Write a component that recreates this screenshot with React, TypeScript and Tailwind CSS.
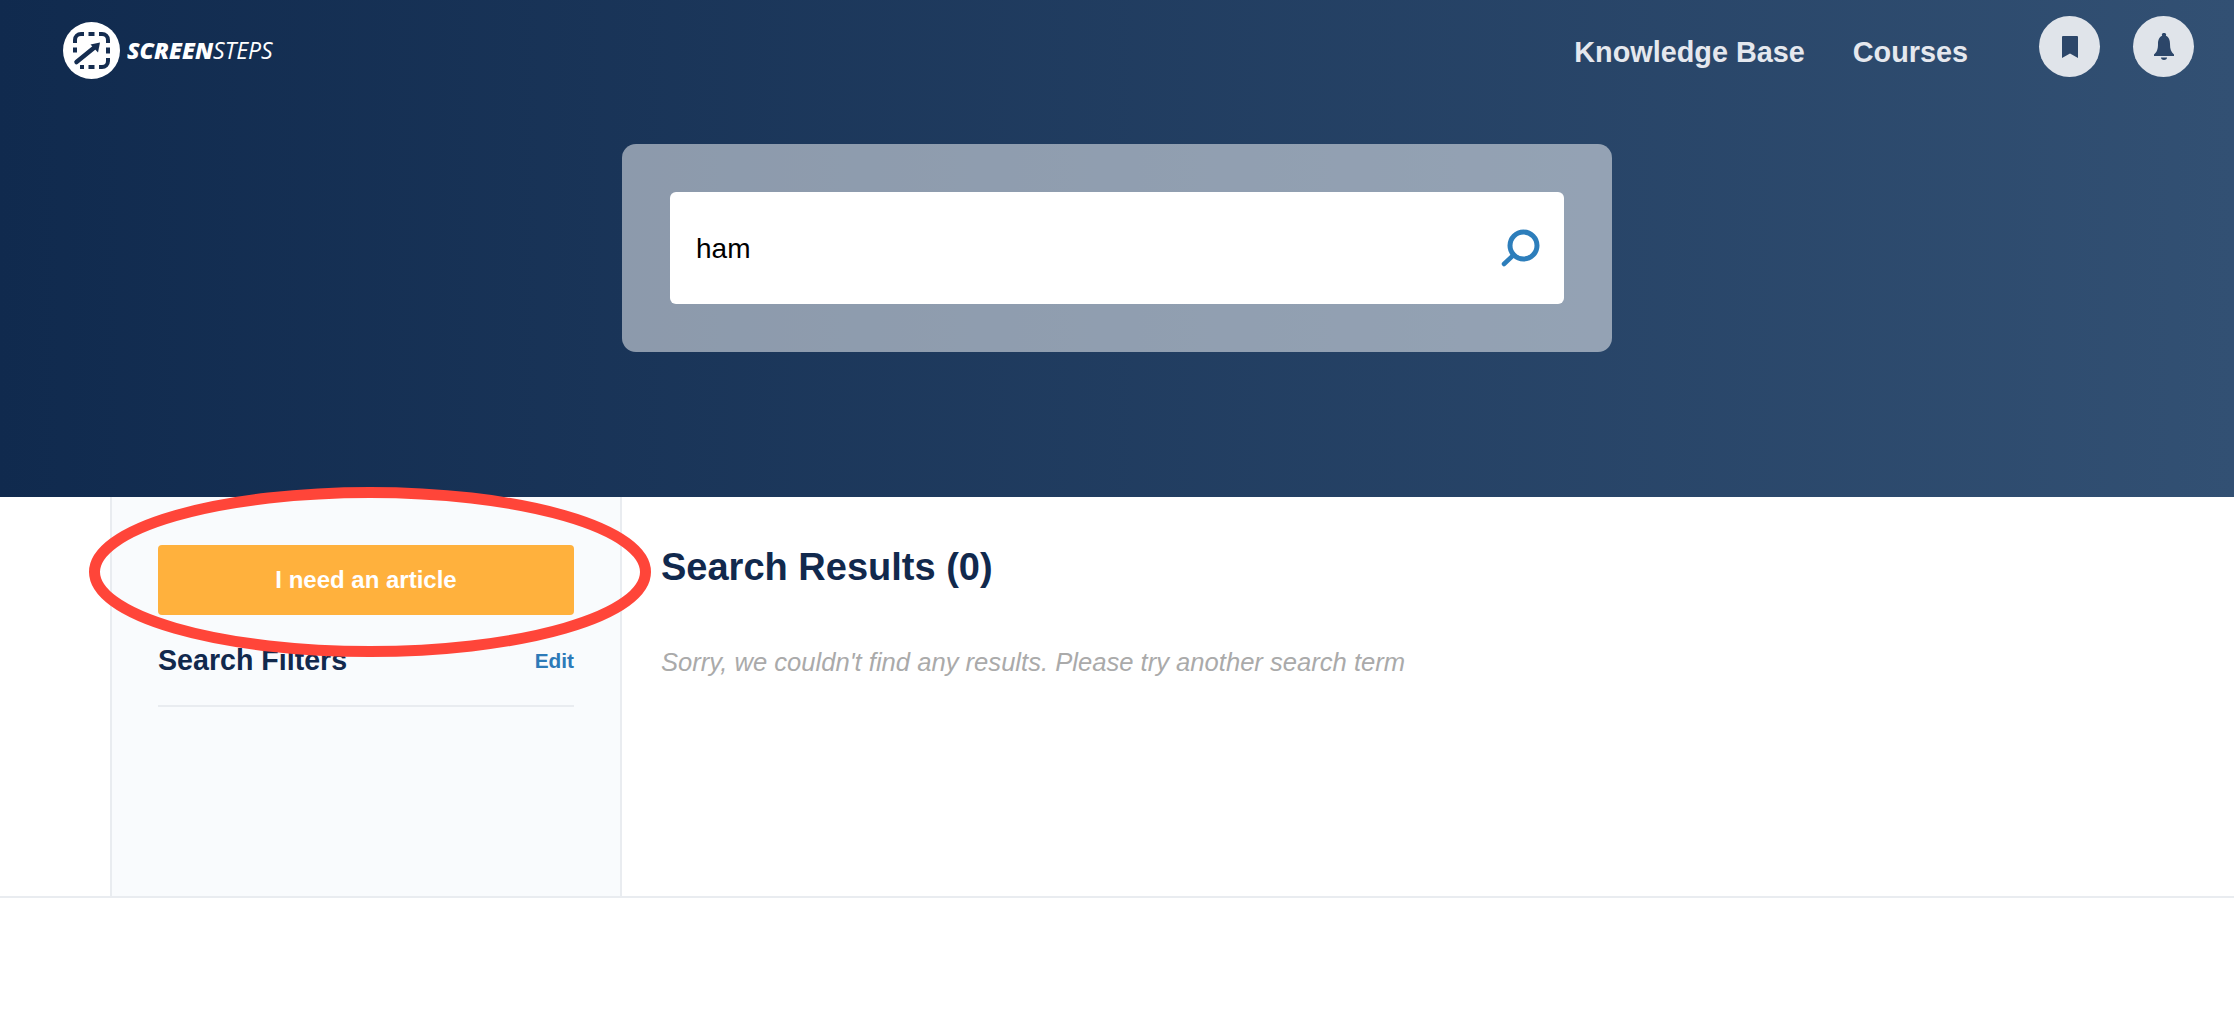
const Logo = () => (
  <svg width="57" height="57" viewBox="0 0 57 57" className="shrink-0" fill="none" stroke="#152d50" strokeWidth="4">
    <circle cx="28.5" cy="28.5" r="28.5" fill="#fff" stroke="none" />
    <path d="M12 21 V18 a6 6 0 0 1 6-6 H21" />
    <path d="M36 12 H39 a6 6 0 0 1 6 6 V21" />
    <path d="M45 36 V39 a6 6 0 0 1 -6 6 H36" />
    <path d="M25.5 12 H31.5 M25.5 45 H31.5 M12 25.5 V30.5 M45 25.5 V31.5 M17 45 H21" />
    <path d="M13.5 40 L32 25" strokeWidth="4.5" strokeLinecap="round" />
    <path d="M27.5 22.5 L37 20.5 L35 30.5 Z" fill="#152d50" stroke="none" />
  </svg>
);

const BookmarkIcon = () => (
  <svg width="16" height="22" viewBox="0 0 16 22">
    <path d="M0 1 A1 1 0 0 1 1 0 H15 A1 1 0 0 1 16 1 V22 L8 17.5 L0 22 Z" fill="#2c4669" />
  </svg>
);

const BellIcon = () => (
  <svg width="20" height="27" viewBox="0 0 20 27">
    <path d="M10 0 a1.8 1.8 0 0 1 1.8 2.8 C15 4 16 7.5 16 11 C16 16 17 19 20 21.5 V23 H0 V21.5 C3 19 4 16 4 11 C4 7.5 5 4 8.2 2.8 A1.8 1.8 0 0 1 10 0 Z" fill="#2c4669" />
    <path d="M7 24.5 H13 A3 2.4 0 0 1 7 24.5 Z" fill="#2c4669" />
  </svg>
);

const SearchIcon = () => (
  <svg width="40" height="40" viewBox="0 0 40 40" fill="none" stroke="#2d7ebb" strokeWidth="5" strokeLinecap="round">
    <circle cx="23.5" cy="17.5" r="13.5" />
    <path d="M13.5 27 L4 36" strokeWidth="4.5" />
  </svg>
);

const Highlight = () => (
  <svg className="absolute left-[89px] top-[487px]" width="562" height="172" viewBox="0 0 562 172" fill="none">
    <ellipse cx="281" cy="85" rx="275.5" ry="79.5" stroke="#ff4539" strokeWidth="11" />
  </svg>
);

export default function App() {
  return (
    <div className="relative min-h-[1028px] bg-white font-['Liberation_Sans',Arial,sans-serif]">
      <header className="h-[497px] bg-gradient-to-r from-[#102a4e] to-[#325073]">
        <div className="flex h-[100px] items-start justify-between pl-[63px] pr-[40px]">
          <div className="flex items-center gap-[7px] pt-[22px]">
            <Logo />
            <span className="font-['Open_Sans',sans-serif] text-[23px] italic leading-none text-white">
              <span className="font-extrabold">SCREEN</span>
              <span className="font-medium">STEPS</span>
            </span>
          </div>
          <nav className="flex items-start pt-[16px]">
            <a className="mt-[20px] text-[28.8px] font-bold leading-[32px] text-[#e5e8ee]">Knowledge Base</a>
            <a className="ml-[48px] mt-[20px] text-[28.8px] font-bold leading-[32px] text-[#e5e8ee]">Courses</a>
            <button className="ml-[71px] flex h-[61px] w-[61px] items-center justify-center rounded-full bg-[#e0e4ea]">
              <BookmarkIcon />
            </button>
            <button className="ml-[33px] flex h-[61px] w-[61px] items-center justify-center rounded-full bg-[#e0e4ea]">
              <BellIcon />
            </button>
          </nav>
        </div>
        <div className="mx-auto mt-[44px] w-[990px] rounded-[14px] bg-white/50 p-[48px]">
          <div className="flex h-[112px] items-center justify-between rounded-[6px] bg-white pl-[26px] pr-[24px]">
            <span className="pt-[2px] text-[28px] text-black">ham</span>
            <SearchIcon />
          </div>
        </div>
      </header>

      <main className="flex h-[401px] border-b-2 border-[#e9ecf0] pl-[110px]">
        <aside className="w-[512px] border-x-2 border-[#e9ecf0] bg-[#f9fbfd] px-[46px] pt-[48px]">
          <button className="h-[70px] w-full rounded-[4px] bg-[#ffb13d] text-[24px] font-bold text-white">
            I need an article
          </button>
          <div className="flex items-center justify-between border-b-2 border-[#e9ecf0] py-[27px]">
            <h3 className="text-[28.6px] font-bold leading-[36px] text-[#11294d]">Search Filters</h3>
            <a className="pt-[2px] text-[20.8px] font-bold text-[#2d7ab8]">Edit</a>
          </div>
        </aside>
        <section className="pl-[39px] pt-[46px]">
          <h2 className="text-[38px] font-bold leading-[48px] text-[#11294d]">Search Results (0)</h2>
          <p className="mt-[52px] text-[25.6px] italic text-[#aaaaaa]">
            Sorry, we couldn't find any results. Please try another search term
          </p>
        </section>
      </main>

      <Highlight />
    </div>
  );
}
